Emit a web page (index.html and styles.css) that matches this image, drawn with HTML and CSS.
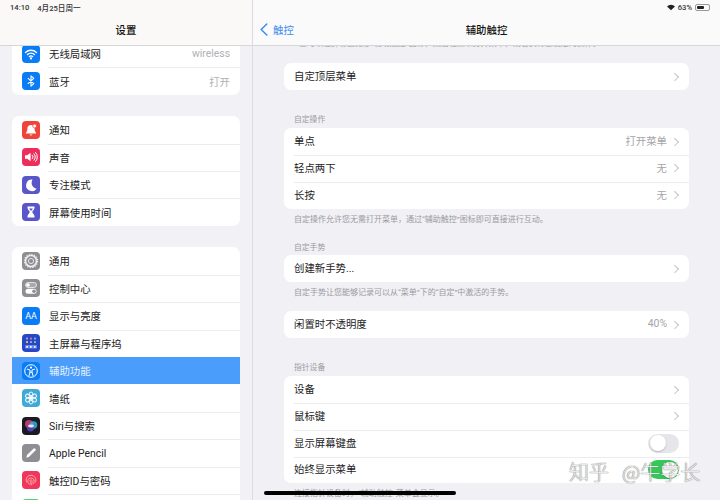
FILE: index.html
```html
<!DOCTYPE html>
<html lang="zh-CN">
<head>
  <meta charset="UTF-8">
  <meta name="viewport" content="width=device-width, initial-scale=1.0">
  <title>辅助触控</title>
  <link rel="stylesheet" href="styles.css">
</head>
<body>
  <div class="app">
    <!-- left column: settings list -->
    <aside class="sidebar">
      <header class="topbar topbar-left">
        <div class="status"><span>14:10</span><span>4月25日周一</span></div>
        <div class="nav nav-center"><h1>设置</h1></div>
      </header>
      <div class="scroll side-scroll">
        <ul class="side-card">
          <li class="side-row">
            <span class="icon bg-blue"><svg viewBox="0 0 18 18"><path d="M3.5 7.5a8 8 0 0 1 11 0M5.5 9.6a5.1 5.1 0 0 1 7 0M7.4 11.6a2.4 2.4 0 0 1 3.2 0" fill="none" stroke="#fff" stroke-width="1.4" stroke-linecap="round"/><circle cx="9" cy="13.4" r="1.1" fill="#fff"/></svg></span>
            <span class="side-label">无线局域网</span><span class="side-value">wireless</span>
          </li>
          <li class="side-row">
            <span class="icon bg-blue"><svg viewBox="0 0 18 18"><path d="M5.8 6.2l6 5.4L9 14.2V3.8l2.8 2.6-6 5.4" fill="none" stroke="#fff" stroke-width="1.1" stroke-linejoin="round"/></svg></span>
            <span class="side-label">蓝牙</span><span class="side-value">打开</span>
          </li>
        </ul>
        <ul class="side-card">
          <li class="side-row">
            <span class="icon bg-red"><svg viewBox="0 0 18 18"><path d="M9 4a3.6 3.6 0 0 0-3.6 3.6c0 2.6-1 3.6-1.6 4.4v.6h10.400v-.6c-.6-.8-1.600-1.800-1.600-4.400A3.600 3.600 0 0 0 9 4z" fill="#fff"/><circle cx="12.600" cy="5" r="1.900" fill="#fff" stroke="#f0443a" stroke-width=".7"/><path d="M7.600 13.600a1.500 1.500 0 0 0 2.800 0z" fill="#fff"/></svg></span>
            <span class="side-label">通知</span>
          </li>
          <li class="side-row">
            <span class="icon bg-pink"><svg viewBox="0 0 18 18"><path d="M3 7.300h2.200L8.600 4.800v8.400L5.200 10.700H3z" fill="#fff"/><path d="M10.300 7.200a2.500 2.500 0 0 1 0 3.600M12 5.800a4.500 4.500 0 0 1 0 6.400M13.600 4.500a6.400 6.400 0 0 1 0 9" fill="none" stroke="#fff" stroke-width="1" stroke-linecap="round"/></svg></span>
            <span class="side-label">声音</span>
          </li>
          <li class="side-row">
            <span class="icon bg-indigo"><svg viewBox="0 0 18 18"><path d="M10.600 3.600a5.800 5.800 0 1 0 4 9.200 6 6 0 0 1-4-9.200z" fill="#fff"/></svg></span>
            <span class="side-label">专注模式</span>
          </li>
          <li class="side-row">
            <span class="icon bg-indigo"><svg viewBox="0 0 18 18"><path d="M5.500 3.500h7v1.200c0 2-2.200 3-2.200 4.300s2.200 2.300 2.200 4.300v1.200h-7v-1.200c0-2 2.200-3 2.200-4.300S5.500 6.700 5.500 4.700z" fill="#fff"/><path d="M7 5.600h4L9 8z" fill="#5856c8"/></svg></span>
            <span class="side-label">屏幕使用时间</span>
          </li>
        </ul>
        <ul class="side-card">
          <li class="side-row">
            <span class="icon bg-gray"><svg viewBox="0 0 18 18"><circle cx="9" cy="9" r="5.500" fill="none" stroke="#eee" stroke-width="1.600"/><circle cx="9" cy="9" r="2.600" fill="none" stroke="#eee" stroke-width=".9"/><circle cx="9" cy="9" r="6.600" fill="none" stroke="#eee" stroke-width="1.200" stroke-dasharray="1.300 1.300"/></svg></span>
            <span class="side-label">通用</span>
          </li>
          <li class="side-row">
            <span class="icon bg-gray"><svg viewBox="0 0 18 18"><rect x="3.500" y="3.500" width="11" height="5" rx="2.500" fill="#fff" fill-opacity=".25" stroke="#fff" stroke-width=".7"/><circle cx="6" cy="6" r="1.800" fill="#fff"/><rect x="3.500" y="9.800" width="11" height="5" rx="2.500" fill="#fff"/><circle cx="12" cy="12.300" r="1.800" fill="#8e8e93"/></svg></span>
            <span class="side-label">控制中心</span>
          </li>
          <li class="side-row">
            <span class="icon bg-blue icon-text">AA</span>
            <span class="side-label">显示与亮度</span>
          </li>
          <li class="side-row">
            <span class="icon bg-navy"><svg viewBox="0 0 18 18"><g fill="#8fa6f5"><rect x="4" y="3.500" width="2" height="2" rx=".6"/><rect x="8" y="3.500" width="2" height="2" rx=".6" fill="#e86aa8"/><rect x="12" y="3.500" width="2" height="2" rx=".6"/><rect x="4" y="7" width="2" height="2" rx=".6" fill="#f2c14e"/><rect x="8" y="7" width="2" height="2" rx=".6"/><rect x="12" y="7" width="2" height="2" rx=".6" fill="#6fd08c"/></g><rect x="3" y="11" width="12" height="3.600" rx="1.200" fill="#6d86ea"/><g fill="#fff"><rect x="4.200" y="12" width="1.700" height="1.700" rx=".5"/><rect x="8" y="12" width="1.700" height="1.700" rx=".5"/><rect x="12" y="12" width="1.700" height="1.700" rx=".5"/></g></svg></span>
            <span class="side-label">主屏幕与程序坞</span>
          </li>
          <li class="side-row side-active">
            <span class="icon bg-blue"><svg viewBox="0 0 18 18"><circle cx="9" cy="9" r="6.300" fill="none" stroke="#fff" stroke-width="1"/><circle cx="9" cy="5.600" r="1.100" fill="#fff"/><path d="M5.300 7.200L8 8v2.300L6.900 13.800M12.700 7.200L10 8v2.300l1.100 3.500M8 10.300h2" fill="none" stroke="#fff" stroke-width="1" stroke-linecap="round" stroke-linejoin="round"/></svg></span>
            <span class="side-label">辅助功能</span>
          </li>
          <li class="side-row">
            <span class="icon bg-cyan"><svg viewBox="0 0 18 18"><g fill="none" stroke="#fff" stroke-width=".9"><ellipse cx="9" cy="5.800" rx="2" ry="2.800"/><ellipse cx="9" cy="12.200" rx="2" ry="2.800"/><ellipse cx="9" cy="5.800" rx="2" ry="2.800" transform="rotate(60 9 9)"/><ellipse cx="9" cy="12.200" rx="2" ry="2.800" transform="rotate(60 9 9)"/><ellipse cx="9" cy="5.800" rx="2" ry="2.800" transform="rotate(120 9 9)"/><ellipse cx="9" cy="12.200" rx="2" ry="2.800" transform="rotate(120 9 9)"/></g></svg></span>
            <span class="side-label">墙纸</span>
          </li>
          <li class="side-row">
            <span class="icon bg-siri"><svg viewBox="0 0 18 18"><circle cx="7" cy="7" r="4" fill="#e0457b" fill-opacity=".8"/><circle cx="11.500" cy="8" r="3.800" fill="#35b6e8" fill-opacity=".8"/><circle cx="8.500" cy="11" r="3.600" fill="#5f4ad0" fill-opacity=".8"/><ellipse cx="9" cy="9" rx="3" ry="1.400" fill="#fff" fill-opacity=".85"/></svg></span>
            <span class="side-label">Siri与搜索</span>
          </li>
          <li class="side-row">
            <span class="icon bg-gray"><svg viewBox="0 0 18 18"><path d="M4.300 13.700l.7-2.600 7.200-7.200 1.900 1.900-7.200 7.200z" fill="#fff"/></svg></span>
            <span class="side-label">Apple Pencil</span>
          </li>
          <li class="side-row">
            <span class="icon bg-rose"><svg viewBox="0 0 18 18"><g fill="none" stroke="#fbb" stroke-width=".8" stroke-linecap="round"><path d="M4.500 11a5 5 0 0 1 0-4 5 5 0 0 1 9 0 5 5 0 0 1 0 4"/><path d="M6.300 12.500a3.500 3.500 0 0 1-.3-3.500 3.200 3.200 0 0 1 6 0 7 7 0 0 1-.4 3.800"/><path d="M8 13.800a6 6 0 0 0 .1-4.500 1 1 0 0 1 1.800 0 8 8 0 0 1-.3 4.500"/></g></svg></span>
            <span class="side-label">触控ID与密码</span>
          </li>
          <li class="side-row">
            <span class="icon bg-green"></span>
          </li>
        </ul>
      </div>
    </aside>

    <!-- right column: detail page -->
    <main class="detail">
      <header class="topbar">
        <div class="status status-right">
          <svg class="status-wifi" viewBox="0 0 10 8"><path d="M5 7.500L0 2.600a7.200 7.200 0 0 1 10 0z" fill="#222"/></svg>
          <span>63%</span>
          <span class="battery"><span class="battery-level"></span></span>
        </div>
        <div class="nav">
          <a class="back"><svg viewBox="0 0 8 13"><path d="M6.800 1L1.200 6.500l5.600 5.500" fill="none" stroke="#3b8df0" stroke-width="1.500" stroke-linecap="round" stroke-linejoin="round"/></svg>触控</a>
          <h1>辅助触控</h1>
          <span></span>
        </div>
      </header>
      <div class="scroll detail-scroll">
        <p class="note note-clipped">您可以在屏幕上拖移“辅助触控”图标，然后轻点以打开菜单，或者执行您设定的操作。</p>

        <ul class="card">
          <li class="row"><span class="row-label">自定顶层菜单</span><span class="chev"></span></li>
        </ul>

        <h2 class="section">自定操作</h2>
        <ul class="card">
          <li class="row"><span class="row-label">单点</span><span class="row-value">打开菜单</span><span class="chev"></span></li>
          <li class="row"><span class="row-label">轻点两下</span><span class="row-value">无</span><span class="chev"></span></li>
          <li class="row"><span class="row-label">长按</span><span class="row-value">无</span><span class="chev"></span></li>
        </ul>
        <p class="note">自定操作允许您无需打开菜单，通过“辅助触控”图标即可直接进行互动。</p>

        <h2 class="section section-tight">自定手势</h2>
        <ul class="card">
          <li class="row"><span class="row-label">创建新手势...</span><span class="chev"></span></li>
        </ul>
        <p class="note">自定手势让您能够记录可以从“菜单”下的“自定”中激活的手势。</p>

        <ul class="card card-spaced">
          <li class="row"><span class="row-label">闲置时不透明度</span><span class="row-value">40%</span><span class="chev"></span></li>
        </ul>

        <h2 class="section">指针设备</h2>
        <ul class="card">
          <li class="row"><span class="row-label">设备</span><span class="chev"></span></li>
          <li class="row"><span class="row-label">鼠标键</span><span class="chev"></span></li>
          <li class="row"><span class="row-label">显示屏幕键盘</span><span class="toggle"></span></li>
          <li class="row"><span class="row-label">始终显示菜单</span><span class="toggle toggle-on"></span></li>
        </ul>
        <p class="note">连接指针设备时，“辅助触控”菜单会显示。</p>
      </div>
    </main>
  </div>

  <div class="watermark"><span>知乎</span><span>@牛学长</span></div>
  <div class="home-bar"></div>
</body>
</html>
```
FILE: styles.css
```css
* {
  box-sizing: border-box;
}

body {
  margin: 0;
  width: 720px;
  height: 500px;
  overflow: hidden;
  position: relative;
  font-family: Roboto, "Noto Sans CJK SC", sans-serif;
  font-size: 10.4px;
  color: #222;
  background-color: #f0f0f5;
}

h1, h2, p, ul {
  margin: 0;
  padding: 0;
  list-style: none;
}

.app {
  display: grid;
  grid-template-columns: 253px 1fr;
  height: 500px;
}

.sidebar {
  display: flex;
  flex-direction: column;
  min-width: 0;
  border-right: 1px solid #dcdce0;
  background-color: #f1f1f6;
}

.detail {
  display: flex;
  flex-direction: column;
  min-width: 0;
}

/* top bars */
.topbar {
  flex: none;
  height: 46px;
  background-color: #fafafa;
  border-bottom: 1px solid #d6d6d9;
  position: relative;
  z-index: 1;
}

.topbar-left {
  background-color: #faf9f7;
}

.status {
  display: flex;
  align-items: center;
  gap: 8px;
  height: 15px;
  padding: 0 10px;
  font-size: 7.6px;
  font-weight: 500;
  color: #333;
}

.status-right {
  justify-content: flex-end;
  gap: 3px;
}

.status-wifi {
  width: 8px;
  height: 7px;
}

.battery {
  width: 15px;
  height: 7px;
  padding: 1px;
  border: 1px solid #999;
  border-radius: 2px;
}

.battery-level {
  display: block;
  width: 62%;
  height: 100%;
  background-color: #222;
  border-radius: 1px;
}

.nav {
  display: grid;
  grid-template-columns: 1fr auto 1fr;
  align-items: center;
  height: 29px;
  padding: 0 7px;
}

.nav-center {
  grid-template-columns: 1fr;
  justify-items: center;
}

.nav h1 {
  font-size: 10.4px;
  font-weight: 500;
  color: #111;
}

.back {
  display: flex;
  align-items: center;
  gap: 5px;
  color: #3b8df0;
}

.back svg {
  width: 8px;
  height: 13px;
}

.scroll {
  flex: 1;
  min-height: 0;
  overflow: hidden;
}

/* sidebar list */
.side-scroll {
  padding: 0 12px;
}

.side-card {
  background-color: #fff;
  border-radius: 7px;
  overflow: hidden;
  margin-bottom: 21.3px;
}

.side-card:first-child {
  margin-top: -6px;
  border-radius: 0 0 7px 7px;
}

.side-row {
  display: flex;
  align-items: center;
  height: 27.45px;
  padding: 0 10px;
  position: relative;
}

.side-row + .side-row::before {
  content: "";
  position: absolute;
  top: 0;
  left: 36px;
  right: 0;
  border-top: 1px solid #ececef;
}

.side-active {
  background-color: #4b9dfb;
  color: #e6f1ff;
}

.side-active::before,
.side-active + .side-row::before {
  display: none;
}

.icon {
  flex: none;
  width: 18px;
  height: 18px;
  border-radius: 4px;
  margin-right: 9px;
  display: flex;
  align-items: center;
  justify-content: center;
}

.icon svg {
  width: 18px;
  height: 18px;
  display: block;
}

.icon-text {
  color: #fff;
  font-size: 9px;
  font-weight: 400;
}

.bg-blue { background-color: #0a7cf5; }
.bg-red { background-color: #f0443a; }
.bg-pink { background-color: #ef2d5c; }
.bg-indigo { background-color: #5856c8; }
.bg-gray { background-color: #8e8e93; }
.bg-navy { background-color: #2747c4; }
.bg-cyan { background-color: #3fa9d8; }
.bg-siri { background-color: #1a1a22; }
.bg-rose { background-color: #f0365a; }
.bg-green { background-color: #4cd464; }

.side-label {
  flex: 1;
}

.side-value {
  color: #b0b0b4;
}

/* detail list */
.detail-scroll {
  padding: 0 31px;
}

.card {
  background-color: #fff;
  border-radius: 7px;
  overflow: hidden;
}

.card-spaced {
  margin-top: 12px;
}

.row {
  display: flex;
  align-items: center;
  height: 26.9px;
  padding: 0 10px;
  position: relative;
}

.row + .row::before {
  content: "";
  position: absolute;
  top: 0;
  left: 10px;
  right: 0;
  border-top: 1px solid #ececef;
}

.row-label {
  flex: 1;
  padding-bottom: 2px;
  color: #1c1c1e;
}

.row-value {
  padding-bottom: 2px;
  color: #a5a5a9;
  margin-right: 5px;
}

.chev {
  width: 5.5px;
  height: 5.5px;
  margin-right: 1.5px;
  border-top: 1px solid #c2c2c6;
  border-right: 1px solid #c2c2c6;
  transform: rotate(45deg);
}

.section {
  font-size: 7.8px;
  font-weight: 400;
  line-height: 12px;
  color: #9b9ba0;
  margin: 24.5px 0 1.5px 10px;
}

.section-tight {
  margin-top: 16px;
}

.note {
  font-size: 8px;
  line-height: 12px;
  color: #9b9ba0;
  margin: 5px 10px 0;
  white-space: nowrap;
}

.note-clipped {
  margin-top: -8px;
  margin-bottom: 13px;
  margin-left: 15px;
}

.toggle {
  width: 31px;
  height: 19px;
  border-radius: 10px;
  background-color: #e5e5ea;
  position: relative;
}

.toggle::after {
  content: "";
  position: absolute;
  top: 1.500px;
  left: 1.500px;
  width: 16px;
  height: 16px;
  border-radius: 50%;
  background-color: #fff;
  box-shadow: 0 1px 2px rgba(0, 0, 0, 0.2);
}

.toggle-on {
  background-color: #34c759;
}

.toggle-on::after {
  left: 13.500px;
}

/* overlays */
.watermark {
  position: absolute;
  left: 569px;
  top: 459px;
  display: flex;
  gap: 13px;
  font-family: "Noto Sans CJK SC", sans-serif;
  font-size: 20px;
  font-weight: 300;
  line-height: 26px;
  color: rgba(255, 255, 255, 0.85);
  text-shadow: 0 0 1px #777, 0 0 1px #777;
  z-index: 2;
}

.home-bar {
  position: absolute;
  left: 264px;
  top: 491px;
  width: 192px;
  height: 4px;
  border-radius: 2px;
  background-color: #000;
  z-index: 2;
}
```
